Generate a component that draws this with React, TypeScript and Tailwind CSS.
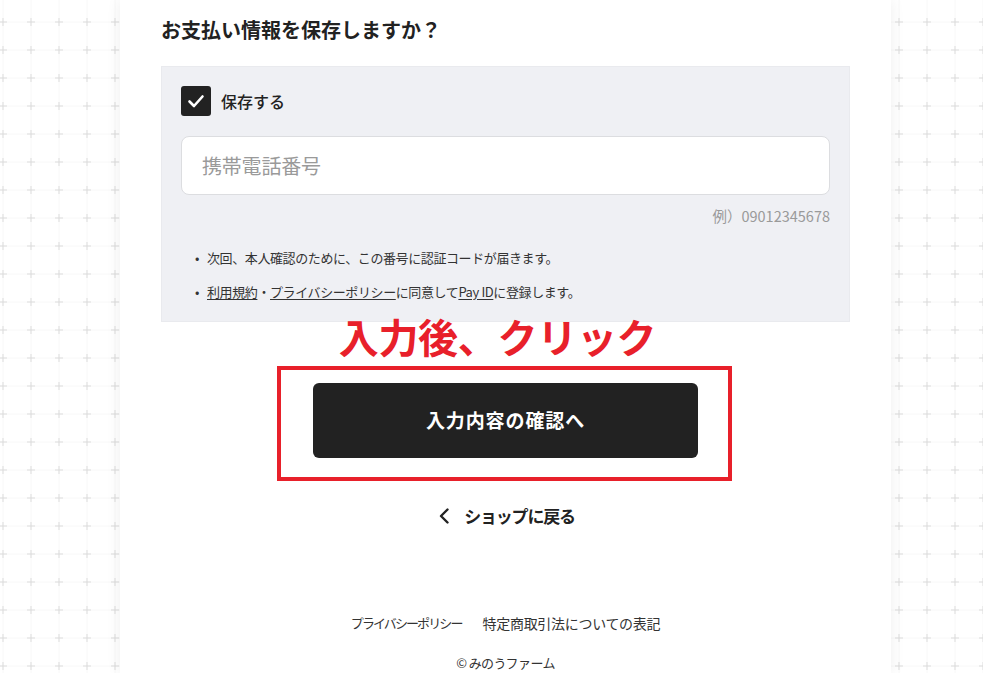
import React from "react";

const jp = { fontFamily: '"Noto Sans CJK JP", "Noto Sans", sans-serif' };

function GridBg() {
  return (
    <svg className="absolute inset-0 w-full h-full" aria-hidden="true">
      <defs>
        <pattern id="plusgrid" x="-11" y="8" width="28" height="28" patternUnits="userSpaceOnUse">
          <line x1="0" y1="14" x2="28" y2="14" stroke="#f8f8f8" strokeWidth="1" />
          <line x1="14" y1="0" x2="14" y2="28" stroke="#f8f8f8" strokeWidth="1" />
          <line x1="10" y1="14" x2="18" y2="14" stroke="#dcdcdc" strokeWidth="1" />
          <line x1="14" y1="10" x2="14" y2="18" stroke="#dcdcdc" strokeWidth="1" />
        </pattern>
      </defs>
      <rect width="100%" height="100%" fill="#ffffff" />
      <rect width="100%" height="100%" fill="url(#plusgrid)" />
    </svg>
  );
}

export default function App() {
  return (
    <div className="relative w-[983px] h-[673px] overflow-hidden bg-white text-[#222222]" style={jp}>
      <GridBg />
      <div className="relative flex pl-[120px] h-full">
        <div className="w-[771px] h-full bg-white shadow-[0_0_14px_rgba(0,0,0,0.07)] px-[41px] pt-[16px] flex flex-col">
          <h2 className="text-[20px] leading-[28px] font-bold">お支払い情報を保存しますか？</h2>

          <div className="mt-[22px] bg-[#eff0f4] border border-[#e9eaee] px-[19px] pt-[19px] pb-[19px]">
            <div className="flex items-center gap-[10px]">
              <div className="w-[30px] h-[30px] rounded-[3px] bg-[#222222] flex items-center justify-center">
                <svg width="30" height="30" viewBox="0 0 30 30">
                  <path d="M8.5 15.5 L13 20 L21.5 10.5" fill="none" stroke="#ffffff" strokeWidth="2.6" strokeLinecap="round" strokeLinejoin="round" />
                </svg>
              </div>
              <span className="text-[16px] leading-[24px] font-medium">保存する</span>
            </div>

            <div className="mt-[20px] h-[59px] bg-white border border-[#dcdde0] rounded-[8px] flex items-center px-[20px]">
              <span className="text-[20px] text-[#9a9a9a] tracking-[-0.2px]">携帯電話番号</span>
            </div>

            <div className="mt-[11px] text-right text-[14.5px] leading-[20px] text-[#9a9a9a]">例）09012345678</div>

            <ul className="mt-[22px] flex flex-col gap-[14px] text-[13px] leading-[20px] text-[#333333]">
              <li className="flex">
                <span className="w-[26px] pl-[14px] shrink-0">•</span>
                <span className="tracking-[-0.4px]">次回、本人確認のために、この番号に認証コードが届きます。</span>
              </li>
              <li className="flex">
                <span className="w-[26px] pl-[14px] shrink-0">•</span>
                <span className="tracking-[-0.4px]">
                  <span className="underline underline-offset-2">利用規約</span>・<span className="underline underline-offset-2">プライバシーポリシー</span>に同意して<span className="underline underline-offset-2">Pay ID</span>に登録します。
                </span>
              </li>
            </ul>
          </div>

          <div className="relative mt-[61px] flex justify-center">
            <div className="absolute top-[-72px] left-0 right-[16px] flex justify-center pointer-events-none">
              <span className="text-[40px] leading-[50px] font-bold text-[#e8202a] tracking-[-0.3px]">入力後、クリック</span>
            </div>
            <div className="relative">
              <div className="absolute top-[-17px] bottom-[-23px] left-[-36px] right-[-34px] border-[4px] border-[#e8202a] pointer-events-none" />
              <button className="w-[385px] h-[75px] rounded-[6px] bg-[#222222] text-white text-[19px] font-bold tracking-[0.9px]">
                入力内容の確認へ
              </button>
            </div>
          </div>

          <div className="mt-[46px] flex justify-center items-center gap-[14px] h-[24px] pl-[2px]">
            <svg width="12" height="18" viewBox="0 0 12 18">
              <path d="M9.5 2.5 L3 9 L9.5 15.5" fill="none" stroke="#222222" strokeWidth="2.4" strokeLinecap="round" strokeLinejoin="round" />
            </svg>
            <span className="text-[17px] leading-[24px] font-bold tracking-[-1.2px]">ショップに戻る</span>
          </div>

          <div className="mt-[85px] flex justify-center gap-[21px] leading-[20px] text-[#333333]">
            <span className="text-[13px] tracking-[-1.9px]">プライバシーポリシー</span>
            <span className="text-[14px] tracking-[-0.3px]">特定商取引法についての表記</span>
          </div>
          <div className="mt-[20px] text-center text-[13px] leading-[20px] text-[#333333] tracking-[-0.6px]">© みのうファーム</div>
        </div>
      </div>
    </div>
  );
}
